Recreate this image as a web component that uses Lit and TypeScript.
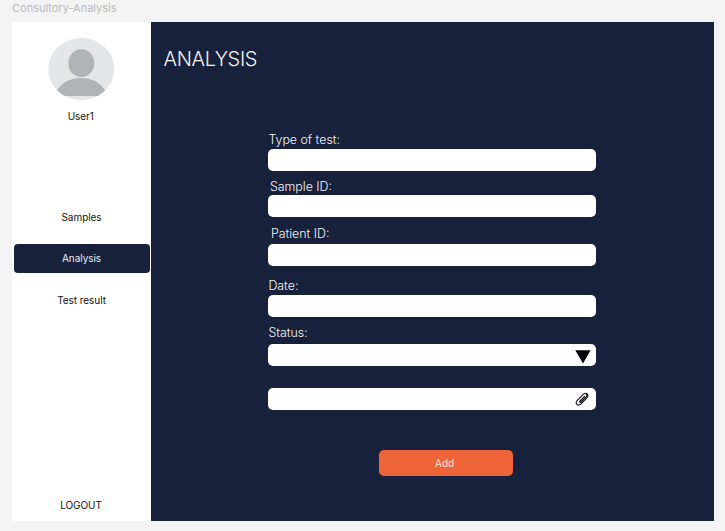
import { LitElement, html, css, svg } from "lit";
import { customElement } from "lit/decorators.js";
import { classMap } from "lit/directives/class-map.js";

@customElement("user-avatar")
class UserAvatar extends LitElement {
  static styles = css`
    :host { display: block; width: 66px; height: 62px; }
    svg { display: block; }
  `;
  render() {
    return html`<svg width="66" height="62" viewBox="0 0 66 62">
      <defs><clipPath id="disc"><ellipse cx="33.2" cy="31" rx="33" ry="31" /></clipPath></defs>
      <ellipse cx="33.2" cy="31" rx="33" ry="31" fill="#e4e6e8" />
      <g clip-path="url(#disc)" fill="#afb4b7">
        <ellipse cx="33.3" cy="25.2" rx="13" ry="14" />
        <path d="M7 58V55.5C12 45 22 39.9 33 39.9S54 45 59 55.5V58Z" />
      </g>
    </svg>`;
  }
}

@customElement("side-bar")
class SideBar extends LitElement {
  static styles = css`
    :host {
      display: flex; flex-direction: column; align-items: center;
      box-sizing: border-box; width: 138.6px; padding: 16.4px 0 9px;
      background: #fff; color: #111; font-size: 10px; line-height: 14px; letter-spacing: -0.05px;
    }
    .name { margin-top: 8.6px; padding-right: 1px; }
    nav { display: flex; flex-direction: column; align-self: stretch; margin-top: 80.4px; gap: 12.2px; }
    .item {
      display: flex; align-items: center; justify-content: center;
      box-sizing: border-box; height: 29px; margin: 0 0.5px 0 2px; padding-right: 1px; border-radius: 4px;
    }
    .active { background: #18213c; color: #e9ebf0; padding-bottom: 1px; }
    .logout { margin-top: auto; padding-right: 0.5px; }
  `;
  render() {
    return html`
      <user-avatar></user-avatar>
      <div class="name">User1</div>
      <nav>
        ${["Samples", "Analysis", "Test result"].map(
          (t) => html`<div class=${classMap({ item: true, active: t === "Analysis" })}>${t}</div>`
        )}
      </nav>
      <div class="logout">LOGOUT</div>
    `;
  }
}

const arrow = svg`<svg class="arrow" width="16" height="14" viewBox="0 0 16 14"><path d="M0.3 0.3H15.6L8 13.6Z" fill="#000"/></svg>`;
const clip = svg`<svg class="clip" width="14" height="14" viewBox="0 0 14 14" fill="none" stroke="#111" stroke-width="1.1" stroke-linecap="round">
  <path d="M9.5 4.4L5 9C4.2 9.9 5.1 10.8 6 10L11 4.8C13.1 2.5 10.7 0.1 8.5 2.1L2.3 8.3C-0.5 11.5 2.9 14.9 6 11.9L12 5.8C13.4 4.2 13.1 2.3 11.7 1.4"/>
</svg>`;

@customElement("analysis-form")
class AnalysisForm extends LitElement {
  static styles = css`
    :host {
      display: flex; flex-direction: column; flex: 1; box-sizing: border-box;
      padding: 25.2px 0 0 13px; background: #18213c; color: #f4f5f8;
    }
    h1 { margin: 0; font-weight: 350; font-size: 20px; line-height: 25px; letter-spacing: -0.35px; }
    form { display: flex; flex-direction: column; width: 328px; margin: 60px 0 0 104.8px; }
    .field { display: flex; flex-direction: column; }
    label { font-size: 12.4px; line-height: 16px; font-weight: 350; }
    .box {
      display: flex; align-items: center; justify-content: flex-end;
      box-sizing: border-box; height: 22px; margin-top: 1.2px; padding-right: 7px;
      border-radius: 5px; background: #fff;
    }
    .sample { margin-top: 8.2px; }
    .sample label { padding-left: 1.5px; }
    .sample .box { margin-top: 0.3px; }
    .patient { margin-top: 8.5px; }
    .patient label { padding-left: 2.5px; }
    .patient .box { margin-top: 2px; }
    .date { margin-top: 12px; }
    .date .box { margin-top: 0.6px; }
    .status { margin-top: 8.4px; }
    .status .box { margin-top: 3.2px; padding-right: 5.6px; }
    .file .box { margin-top: 22px; }
    .arrow { margin-top: 3px; }
    .add {
      align-self: center; width: 134px; height: 26px; margin: 40.1px 0 0 26.5px; padding: 0 2px 0 0;
      border: 0; border-radius: 5px; background: #ed6438; color: #fbe6dd; font: inherit; font-size: 10px;
    }
  `;
  fields = [
    { key: "test", label: "Type of test:" },
    { key: "sample", label: "Sample ID:" },
    { key: "patient", label: "Patient ID:" },
    { key: "date", label: "Date:" },
    { key: "status", label: "Status:", icon: arrow },
    { key: "file", label: "", icon: clip },
  ];
  render() {
    return html`
      <h1>ANALYSIS</h1>
      <form>
        ${this.fields.map(
          (f) => html`<div class="field ${f.key}">
            ${f.label ? html`<label>${f.label}</label>` : ""}
            <div class="box">${f.icon ?? ""}</div>
          </div>`
        )}
        <button class="add" type="button">Add</button>
      </form>
    `;
  }
}

@customElement("app-root")
class AppRoot extends LitElement {
  static styles = css`
    :host {
      display: flex; flex-direction: column; box-sizing: border-box;
      width: 725px; height: 531px; padding: 0 10.6px 10.4px 12px; overflow: hidden;
      background: #f4f4f4; font-family: Inter, "Liberation Sans", sans-serif;
    }
    .title { height: 21.6px; color: #b9b9b9; font-size: 11px; line-height: 16px; }
    .frame { display: flex; flex: 1; }
  `;
  render() {
    return html`
      <div class="title">Consultory-Analysis</div>
      <div class="frame"><side-bar></side-bar><analysis-form></analysis-form></div>
    `;
  }
}
